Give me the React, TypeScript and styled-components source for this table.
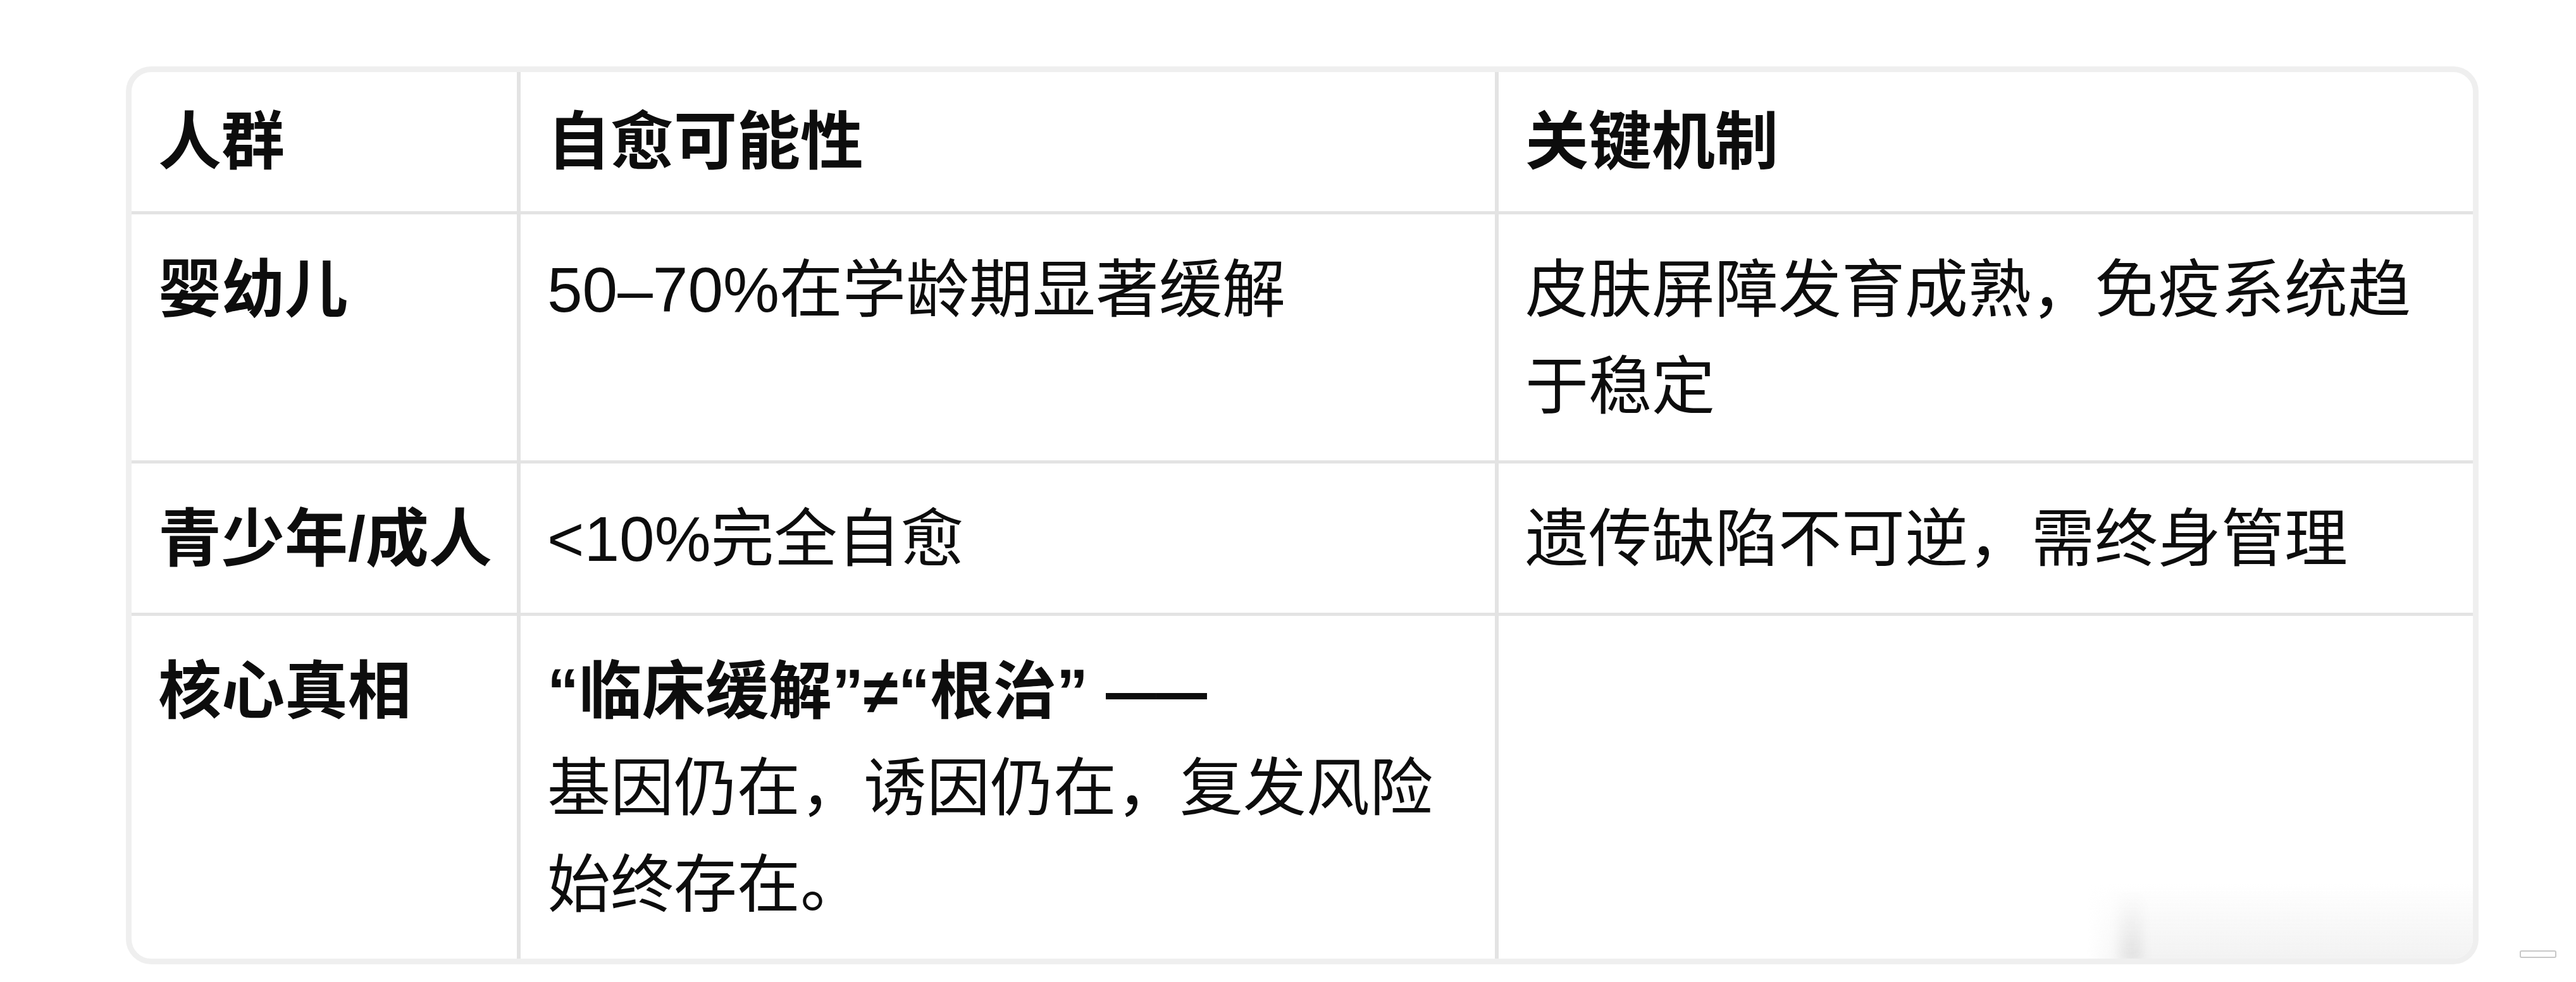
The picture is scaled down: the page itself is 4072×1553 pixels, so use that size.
import type { ReactNode } from 'react';
import { createGlobalStyle, styled } from 'styled-components';

type RowType = {
  id: string;
  group: string;
  chance: ReactNode;
  mechanism: string;
};

const GlobalStyle = createGlobalStyle`
  html, body {
    margin: 0;
    background: #ffffff;
  }
  body {
    font-family: "Liberation Sans", "Noto Sans CJK SC", sans-serif;
    color: #0d0d0d;
  }
`;

const Page = styled.main`
  position: relative;
  box-sizing: border-box;
  min-height: 1553px;
  padding: 105px 154px 0 199px;
`;

const Frame = styled.div`
  position: relative;
  border: 9px solid #efefef;
  border-radius: 40px;
  overflow: hidden;
  background: #ffffff;
`;

const Table = styled.table`
  width: 100%;
  table-layout: fixed;
  border-collapse: separate;
  border-spacing: 0;
  font-size: 100px;
  line-height: 153px;
`;

const HeadCell = styled.th`
  padding: 34px 42px 33px;
  text-align: left;
  font-weight: 600;
  white-space: nowrap;
  border-bottom: 5px solid #e3e3e3;
  border-right: 6px solid #e3e3e3;

  &:last-child {
    border-right: none;
  }
`;

const BodyRow = styled.tr`
  &:not(:last-child) td {
    border-bottom: 5px solid #e3e3e3;
  }
`;

const Cell = styled.td`
  padding: 43px 42px 40px;
  vertical-align: top;
  font-weight: 400;
  border-right: 6px solid #e3e3e3;

  &:last-child {
    border-right: none;
  }
`;

const LabelCell = styled(Cell)`
  font-weight: 600;
  white-space: nowrap;
`;

const Strong = styled.span`
  font-weight: 600;
`;

const Dash = styled.span`
  display: inline-block;
  transform: scaleX(0.8);
  transform-origin: left center;
  margin-right: -40px;
`;

const Fade = styled.div`
  position: absolute;
  right: 0;
  bottom: 0;
  width: 610px;
  height: 118px;
  background: linear-gradient(
    to bottom,
    rgba(242, 242, 242, 0) 0%,
    rgba(240, 240, 240, 0.85) 100%
  );
  mask-image: linear-gradient(to right, transparent 0, #000 70px);
  pointer-events: none;
`;

const Smudge = styled.div`
  position: absolute;
  left: 48px;
  top: 14px;
  bottom: -4px;
  width: 40px;
  background: linear-gradient(
    to bottom,
    rgba(0, 0, 0, 0) 0%,
    rgba(0, 0, 0, 0.07) 100%
  );
  filter: blur(8px);
`;

const ScrollMarker = styled.div`
  position: absolute;
  top: 1503px;
  right: 31px;
  width: 58px;
  height: 12px;
  box-sizing: border-box;
  border: 2px solid #c8c8c8;
  border-radius: 3px;
  background: #ffffff;
`;

const rows: RowType[] = [
  {
    id: 'infant',
    group: '婴幼儿',
    chance: '50–70%在学龄期显著缓解',
    mechanism: '皮肤屏障发育成熟，免疫系统趋于稳定',
  },
  {
    id: 'adult',
    group: '青少年/成人',
    chance: '<10%完全自愈',
    mechanism: '遗传缺陷不可逆，需终身管理',
  },
  {
    id: 'truth',
    group: '核心真相',
    chance: (
      <>
        <Strong>
          “临床缓解”≠“根治” <Dash>——</Dash>
        </Strong>
        <br />
        基因仍在，诱因仍在，复发风险始终存在。
      </>
    ),
    mechanism: '',
  },
];

function App() {
  return (
    <>
      <GlobalStyle />
      <Page>
        <Frame>
          <Table>
            <colgroup>
              <col style={{ width: 615 }} />
              <col style={{ width: 1546 }} />
              <col />
            </colgroup>
            <thead>
              <tr>
                <HeadCell>人群</HeadCell>
                <HeadCell>自愈可能性</HeadCell>
                <HeadCell>关键机制</HeadCell>
              </tr>
            </thead>
            <tbody>
              {rows.map((row) => (
                <BodyRow key={row.id}>
                  <LabelCell>{row.group}</LabelCell>
                  <Cell>{row.chance}</Cell>
                  <Cell>{row.mechanism}</Cell>
                </BodyRow>
              ))}
            </tbody>
          </Table>
          <Fade>
            <Smudge />
          </Fade>
        </Frame>
        <ScrollMarker />
      </Page>
    </>
  );
}

export default App;
